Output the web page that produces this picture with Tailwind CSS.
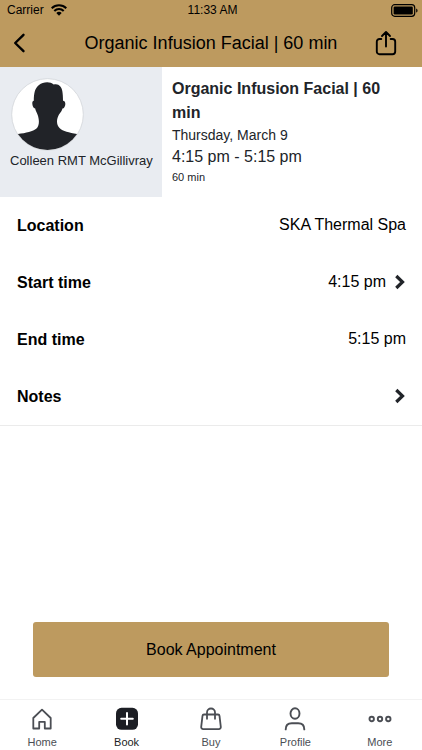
<!DOCTYPE html>
<html lang="en">
<head>
<meta charset="utf-8">
<meta name="viewport" content="width=device-width, initial-scale=1">
<title>Book Appointment</title>
<script src="https://cdn.jsdelivr.net/npm/@tailwindcss/browser@4"></script>
</head>
<body class="flex min-h-screen flex-col bg-white font-['Liberation_Sans',Arial,sans-serif] text-black">
  <header class="bg-[#bd9a5f]">
    <div class="grid h-5 grid-cols-3 items-center pr-1 pl-[7px] text-xs">
      <div class="flex items-center gap-[7px]">
        <span>Carrier</span>
        <svg class="h-3 w-4" viewBox="0 0 16 12" fill="none" stroke="#000" stroke-width="2" aria-hidden="true"><path d="M.7 4.2a10.3 10.3 0 0 1 14.6 0"/><path d="M3.3 7a6.6 6.6 0 0 1 9.4 0"/><path d="M8 11.8 5.3 9.1a3.8 3.8 0 0 1 5.4 0Z" fill="#000" stroke="none"/></svg>
      </div>
      <time class="text-center">11:33 AM</time>
      <svg class="h-[13px] w-[27px] justify-self-end" viewBox="0 0 27 13" aria-hidden="true"><rect x=".7" y=".7" width="23" height="11.6" rx="3" fill="none" stroke="#000" stroke-width="1.2"/><rect x="2.6" y="2.6" width="19.2" height="7.8" rx="1.2"/><path d="M25.2 4.4c1.8.6 1.8 3.6 0 4.2Z"/></svg>
    </div>
    <div class="flex h-[47px] items-center justify-between px-3 pb-0.5">
      <button type="button" aria-label="Back" class="flex w-12 py-2"><svg class="h-5 w-4" viewBox="0 0 16 20" fill="none" stroke="#000" stroke-width="2.4" stroke-linecap="round" stroke-linejoin="round"><path d="M11.5 1.8 3.2 10l8.3 8.2"/></svg></button>
      <h1 class="text-lg">Organic Infusion Facial | 60 min</h1>
      <button type="button" aria-label="Share" class="flex w-12 justify-end pr-3"><svg class="h-[26px] w-6" viewBox="0 0 24 26" fill="none" stroke="#000" stroke-width="1.9" stroke-linecap="round" stroke-linejoin="round"><path d="M7.3 9H5.5A2.7 2.7 0 0 0 2.8 11.7v9.8a2.7 2.7 0 0 0 2.7 2.7h13a2.7 2.7 0 0 0 2.7-2.7v-9.8A2.7 2.7 0 0 0 18.5 9h-1.8M12 16.5V2.5M8 6l4-4 4 4"/></svg></button>
    </div>
  </header>

  <main class="flex flex-1 flex-col">
    <section class="flex">
      <div class="w-[162px] shrink-0 bg-[#e9ecf1] px-[10px] pt-[11px] text-[#212429]">
        <svg class="ml-px size-[73px]" viewBox="0 0 73 73" role="img" aria-label="Colleen RMT McGillivray">
          <defs><clipPath id="portrait"><circle cx="36.5" cy="36.5" r="35.5"/></clipPath></defs>
          <circle cx="36.5" cy="36.5" r="35.8" fill="#fff" stroke="#cfd1d6" stroke-width=".7"/>
          <path clip-path="url(#portrait)" fill="#212328" d="M0 58 7 56C15 55 22 53.5 25.5 50.5 28.5 47.5 28.5 42 26.5 36.5 25.5 34 24.5 32.5 24.2 30.5 21.5 30.5 20 22.8 22.8 22.8 22.8 15 24 10 28 7 32 3.800 39 3 42.7 6.6 47.5 5.2 50.500 8.500 51.300 13 51.800 16 52 19 52 22.800 55.800 22.800 54.500 30.500 51.500 30.500 50.800 33 49.500 34.500 48 36.500 45.500 41 45 46 48.500 50 52 53.500 58 54.500 66 56L73 58v15H0Z"/>
        </svg>
        <p class="text-[13px] leading-5 whitespace-nowrap">Colleen RMT McGillivray</p>
      </div>
      <div class="flex-1 px-[10px] pt-[10px] pb-3 text-[#212429]">
        <h2 class="text-base leading-6 font-bold">Organic Infusion Facial | 60 min</h2>
        <p class="text-sm leading-5">Thursday, March 9</p>
        <p class="text-base leading-6">4:15 pm - 5:15 pm</p>
        <p class="text-[11px] leading-4">60 min</p>
      </div>
    </section>

    <dl class="border-b border-[#ebebeb] pr-4 pl-[17px]">
      <div class="flex h-[57px] items-center justify-between"><dt class="text-base font-bold">Location</dt><dd class="pb-0.5 text-base">SKA Thermal Spa</dd></div>
      <div class="flex h-[57px] items-center justify-between"><dt class="text-base font-bold">Start time</dt><dd class="pb-0.5"><button type="button" class="flex items-center gap-2 text-base">4:15 pm <svg class="h-4 w-3" viewBox="0 0 12 16" fill="none" stroke="#212429" stroke-width="3.2" aria-hidden="true"><path d="m2.3 2 6.2 6-6.2 6"/></svg></button></dd></div>
      <div class="flex h-[57px] items-center justify-between"><dt class="text-base font-bold">End time</dt><dd class="pb-0.5 text-base">5:15 pm</dd></div>
      <div class="flex h-[57px] items-center justify-between"><dt class="text-base font-bold">Notes</dt><dd class="pb-0.5"><button type="button" aria-label="Add notes" class="flex"><svg class="h-4 w-3" viewBox="0 0 12 16" fill="none" stroke="#212429" stroke-width="3.2" aria-hidden="true"><path d="m2.3 2 6.2 6-6.2 6"/></svg></button></dd></div>
    </dl>

    <div class="mt-auto px-[33px] pb-[22px]">
      <button type="button" class="h-[55px] w-full rounded-[3px] bg-[#bd9a5f] text-base">Book Appointment</button>
    </div>
  </main>

  <nav class="grid h-[51px] grid-cols-5 border-t border-[#f2f2f2] text-[11px] leading-4 text-[#4b4e54]">
    <a href="#home" class="flex flex-col items-center gap-[3px] pt-[7px]"><svg class="size-6" viewBox="0 0 24 24" fill="none" stroke="currentColor" stroke-width="1.8" stroke-linejoin="round"><path d="M3.3 11 12 2.6l8.7 8.4v10.5h-5.9v-6.7H9.2v6.7H3.3Z"/></svg>Home</a>
    <a href="#book" aria-current="page" class="flex flex-col items-center gap-[3px] pt-[7px] text-[#1c1e24]"><svg class="size-6" viewBox="0 0 24 24"><rect x="1" y=".8" width="22" height="22" rx="5.5" fill="#1c1e24"/><path d="M12 6v11.6M6.2 11.8h11.6" stroke="#fff" stroke-width="2" stroke-linecap="round"/></svg>Book</a>
    <a href="#buy" class="flex flex-col items-center gap-[3px] pt-[7px]"><svg class="size-6" viewBox="0 0 24 24" fill="none" stroke="currentColor" stroke-width="1.8" stroke-linecap="round" stroke-linejoin="round"><path d="M5 7.5h14a1.5 1.5 0 0 1 1.5 1.3l1.3 11a2 2 0 0 1-2 2.3H4.2a2 2 0 0 1-2-2.3l1.3-11A1.5 1.5 0 0 1 5 7.5ZM8 11.8V5.5a4 4 0 0 1 8 0v6.3"/></svg>Buy</a>
    <a href="#profile" class="flex flex-col items-center gap-[3px] pt-[7px]"><svg class="size-6" viewBox="0 0 24 24" fill="none" stroke="currentColor" stroke-width="1.9" stroke-linecap="round"><ellipse cx="12" cy="6.5" rx="4.5" ry="5.2"/><path d="M2.7 22.4c0-4.2 2.6-6.2 6.1-6.2h6.4c3.5 0 6.1 2 6.1 6.2"/></svg>Profile</a>
    <a href="#more" class="flex flex-col items-center gap-[3px] pt-[7px]"><svg class="size-6" viewBox="0 0 24 24" fill="none" stroke="currentColor" stroke-width="1.9"><circle cx="3.7" cy="12" r="2.2"/><circle cx="12" cy="12" r="2.2"/><circle cx="20.3" cy="12" r="2.2"/></svg>More</a>
  </nav>
</body>
</html>
